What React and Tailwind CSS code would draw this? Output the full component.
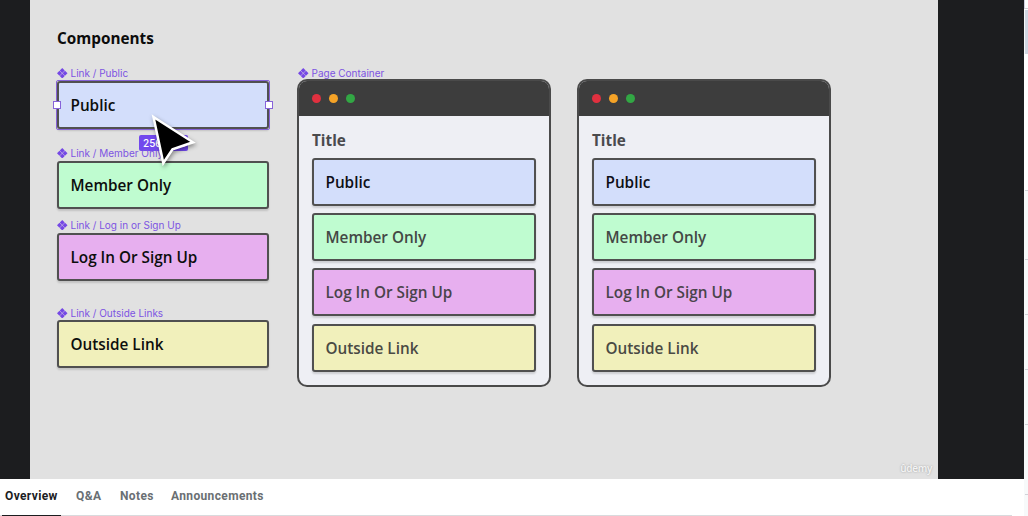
const LINKS = [
  { name: "Public", color: "bg-[#d3defb]", text: "text-[#0d0f16]" },
  { name: "Member Only", color: "bg-[#bffcd0]", text: "text-[#444845]" },
  { name: "Log In Or Sign Up", color: "bg-[#e7afef]", text: "text-[#4a444b]" },
  { name: "Outside Link", color: "bg-[#f1f0bb]", text: "text-[#4a4a44]" },
];

function ComponentLabel({ children }) {
  return (
    <div className="flex h-[14px] items-center gap-[3px] whitespace-nowrap font-['Inter',sans-serif] text-[10px] leading-[14px] text-[#7d54e2]">
      <svg className="size-[10.5px] shrink-0" viewBox="0 0 11 11" fill="#7548e5">
        <path d="M5.5 0 8.1 2.6 5.5 5.2 2.9 2.6ZM5.5 5.8 8.1 8.4 5.5 11 2.9 8.4ZM2.6 2.9 5.2 5.5 2.6 8.1 0 5.5ZM8.4 2.9 11 5.5 8.4 8.1 5.8 5.5Z" />
      </svg>
      <span>{children}</span>
    </div>
  );
}

function LinkBox({ link, dark }) {
  return (
    <div
      className={`flex h-[48px] items-center rounded-[3px] border-2 border-[#505050] pl-[11.5px] pt-px text-[15.3px] leading-[23px] font-semibold shadow-[0_2px_2px_rgba(0,0,0,0.14)] ${link.color} ${dark ? "text-[#0c0e0d]" : link.text}`}
    >
      {link.name}
    </div>
  );
}

function Browser() {
  return (
    <div className="h-[308px] w-[254px] overflow-hidden rounded-[10px] border-2 border-[#4a4a4a] bg-[#eeeff4]">
      <div className="flex h-[35px] items-center gap-2 bg-[#3d3d3d] pl-[13px]">
        <i className="size-[9px] rounded-full bg-[#e0303f]" />
        <i className="size-[9px] rounded-full bg-[#f5a327]" />
        <i className="size-[9px] rounded-full bg-[#32a744]" />
      </div>
      <div className="flex flex-col px-[13px] pt-[12px]">
        <h2 className="h-[30px] text-[15.3px] leading-6 font-bold text-[#4a4a4c]">Title</h2>
        <div className="flex flex-col gap-[7.2px]">
          {LINKS.map((link) => <LinkBox key={link.name} link={link} />)}
        </div>
      </div>
    </div>
  );
}

function Handle({ side }) {
  return <i className={`absolute top-[20px] size-2 border border-[#8763d9] bg-white ${side}`} />;
}

function Pointer() {
  return (
    <svg className="absolute left-[93px] top-[32px] z-10 h-[56px] w-[52px] drop-shadow-[1px_2px_2px_rgba(0,0,0,0.4)]" viewBox="0 0 52 56">
      <path d="M3.5 4 43 29.3 22.5 36.3 13.3 50Z" fill="#000" stroke="#fff" strokeWidth="2.5" strokeLinejoin="miter" />
    </svg>
  );
}

function Canvas() {
  return (
    <div className="h-[479px] w-[908px] bg-[#e1e1e1] pl-[27px] pt-[27px] font-['Open_Sans',sans-serif]">
      <h1 className="h-[39px] text-[15.3px] leading-[23px] font-bold text-[#0c0c0c]">Components</h1>
      <div className="flex">
        <div className="flex w-[212px] flex-col">
          <div className="mb-px"><ComponentLabel>Link / Public</ComponentLabel></div>
          <div className="relative rounded-[1px] outline-1 outline-[#8462d6]">
            <LinkBox link={LINKS[0]} dark />
            <Handle side="left-[-4px]" />
            <Handle side="right-[-4px]" />
            <div className="absolute left-[82px] top-[54px] flex h-[16px] w-[49px] items-center whitespace-nowrap rounded-[2px] bg-[#7249ed] pl-1 font-['Inter',sans-serif] text-[10px] font-medium text-white">256 × 56</div>
            <Pointer />
          </div>
          <div className="relative mt-[17px] mb-px"><ComponentLabel>Link / Member Only</ComponentLabel></div>
          <LinkBox link={LINKS[1]} dark />
          <div className="mt-[9px] mb-px"><ComponentLabel>Link / Log in or Sign Up</ComponentLabel></div>
          <LinkBox link={LINKS[2]} dark />
          <div className="mt-[25px]"><ComponentLabel>Link / Outside Links</ComponentLabel></div>
          <LinkBox link={LINKS[3]} dark />
        </div>
        <div className="ml-7 flex flex-col">
          <div className="h-[13px] pl-px"><ComponentLabel>Page Container</ComponentLabel></div>
          <Browser />
        </div>
        <div className="ml-[26px] mt-[13px]"><Browser /></div>
      </div>
    </div>
  );
}

function Sidebar() {
  return (
    <aside className="flex w-1 flex-col bg-[#f7f9fa]">
      <div className="h-2 border-l border-[#d1d2e0] bg-white" />
      <div className="h-px bg-[#d1d2d8]" />
      <div className="h-px bg-white" />
      <div className="ml-px h-11 bg-[#d1d7e2]" />
      <div className="h-[136px] bg-white" />
      <div className="ml-px h-[69px] border-t border-[#d1d2d8]" />
      <div className="ml-px h-[55px] border-t border-[#d1d2d8]" />
      <div className="ml-px h-[55px] border-t border-[#d1d2d8]" />
      <div className="ml-px h-[55px] border-t border-[#d1d2d8]" />
      <div className="ml-px h-[70px] border-t border-[#d1d2d8]" />
      <div className="ml-px h-[22px] border-t border-[#d1d2d8]" />
    </aside>
  );
}

export default function App() {
  return (
    <div className="flex h-[516px] w-[1028px] overflow-hidden bg-white">
      <main className="w-[1024px]">
        <section className="relative flex h-[479px] bg-[#1c1d1f] pl-[30px]">
          <Canvas />
          <span className="absolute right-[92px] top-[460px] font-['Open_Sans',sans-serif] text-[10px] leading-4 font-semibold tracking-[-0.3px] text-[#f4f4f4] [text-shadow:0_0_2px_#999]">ûdemy</span>
        </section>
        <nav className="mr-3 flex h-[37px] gap-[15px] border-b border-[#d9dadd] pl-[2px] font-['Roboto',sans-serif] text-[12px] font-bold tracking-[0.36px] text-[#6a6f73]">
          <span className="-mb-px h-[37px] w-[59px] border-b border-[#1c1d1f] pl-[3px] leading-[34px] text-[#1c1d1f]">Overview</span>
          <span className="w-[29px] leading-[34px]">Q&amp;A</span>
          <span className="w-[36px] leading-[34px]">Notes</span>
          <span className="leading-[34px]">Announcements</span>
        </nav>
      </main>
      <Sidebar />
    </div>
  );
}
